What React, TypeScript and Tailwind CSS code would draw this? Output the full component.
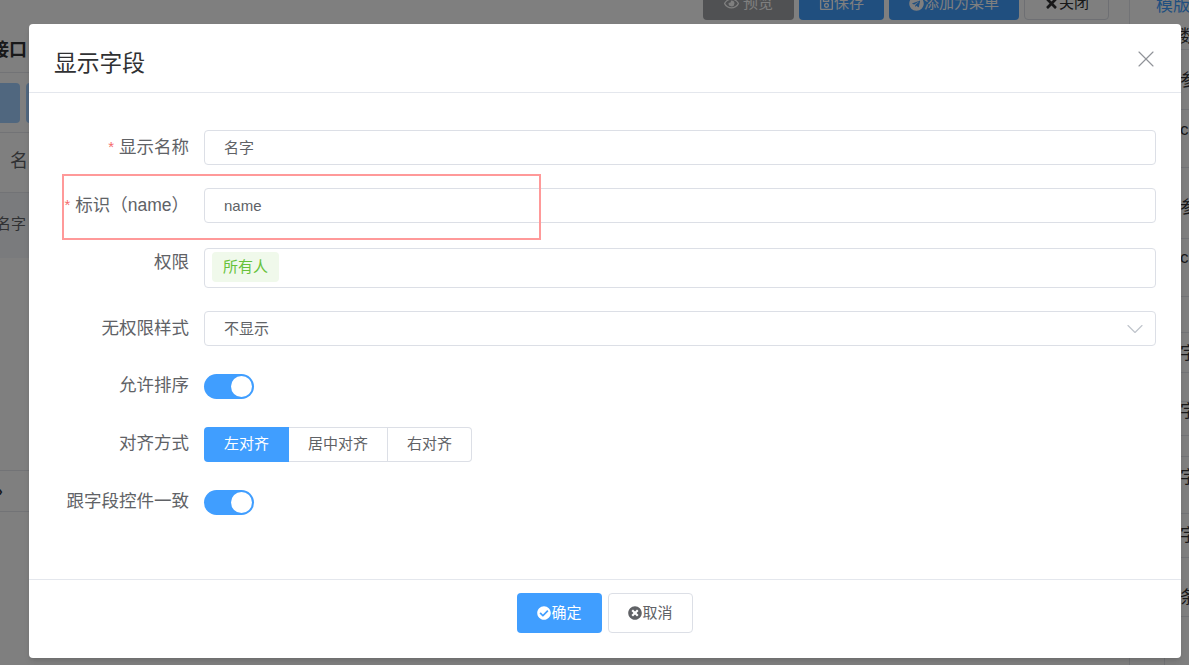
import { X, ChevronDown } from "lucide-react";
import { FaCheckCircle, FaTimesCircle, FaRegSave, FaTimes, FaRegEye, FaTelegram } from "react-icons/fa";

const FONT = "font-['Liberation_Sans','Noto_Sans_CJK_SC',sans-serif]";

function FormRow({ label, required, height, labelClass, children }: { label: string; required?: boolean; height: string; labelClass?: string; children: React.ReactNode }) {
  return (
    <div className={`flex ${height}`}>
      <label className={`flex h-[34px] w-[175px] shrink-0 items-center justify-end pr-[15px] text-[17.5px] text-[#606266] whitespace-nowrap ${labelClass ?? ""}`}>
        {required && <span className="mr-[5px] text-[15px] text-[#f56c6c]">*</span>}
        {label}
      </label>
      <div className="min-w-0 flex-1">{children}</div>
    </div>
  );
}

function TextBox({ value }: { value: string }) {
  return (
    <div className="flex h-[35px] items-center rounded border border-[#dcdfe6] bg-white pl-[19px] pt-[2px] text-[15px] text-[#606266]">
      {value}
    </div>
  );
}

function Toggle() {
  return (
    <div className="flex h-[25px] w-[50px] items-center justify-end rounded-full bg-[#409eff] pr-[2px]">
      <div className="h-[21px] w-[21px] rounded-full bg-white" />
    </div>
  );
}

function Backdrop() {
  return (
    <div className="flex h-[665px] w-full flex-col overflow-hidden bg-white">
      <div className="-mt-[14px] flex h-[34px] justify-end gap-[5px] pr-[80px] text-[15px]">
        <div className="flex w-[91px] items-center justify-center gap-1 rounded bg-[#a0a2a6] text-white"><FaRegEye />预览</div>
        <div className="flex w-[85px] items-center justify-center rounded bg-[#409eff] text-white"><FaRegSave />保存</div>
        <div className="flex w-[130px] items-center justify-center rounded bg-[#409eff] text-white"><FaTelegram />添加为菜单</div>
        <div className="flex w-[85px] items-center justify-center rounded border border-[#dcdfe6] text-[#303133]"><FaTimes />关闭</div>
      </div>
      <div className="flex flex-1">
        <div className="flex w-[29px] flex-col">
          <div className="flex h-[53px] items-center overflow-hidden whitespace-nowrap border-b border-[#e4e7ed] pt-[8px] text-lg font-bold text-[#303133]"><span className="-ml-[9px]">接口</span></div>
          <div className="flex h-[60px] items-center gap-[6px] overflow-hidden border-b border-[#e4e7ed]">
            <div className="h-[40px] w-[20px] shrink-0 rounded-r bg-[#a0cfff]" />
            <div className="h-[40px] w-[20px] shrink-0 rounded-l bg-[#a0cfff]" />
          </div>
          <div className="flex h-[60px] items-center overflow-hidden whitespace-nowrap border-b border-[#e4e7ed] pb-[3px] pl-[10px] text-lg text-[#606266]">名字</div>
          <div className="flex h-[65px] items-center overflow-hidden whitespace-nowrap bg-[#f5f7fa] pb-[3px] text-[15px] text-[#606266]"><span className="-ml-[4px]">名字</span></div>
          <div className="mt-[212px] flex h-[42px] items-center overflow-hidden border-y border-[#e4e7ed] text-sm font-bold text-[#303133]"><span className="-ml-[2px]">›</span></div>
        </div>
      </div>
    </div>
  );
}

const EDGE_ROWS = [
  { h: "h-[60px] pt-[2px]", t: "参" },
  { h: "h-[58px] pb-[18px]", t: "cr" },
  { h: "h-[71px] pt-[10px]", t: "参" },
  { h: "h-[58px] pb-[20px]", t: "cr" },
  { h: "h-[36px]", t: "" },
  { h: "h-[40px] pt-[2px]", t: "字" },
  { h: "h-[29px]", t: "" },
  { h: "h-[34px] pb-[14px]", t: "字" },
  { h: "h-[21px]", t: "" },
  { h: "h-[57px] pb-[14px]", t: "字" },
  { h: "h-[44px]", t: "字" },
  { h: "h-[59px] pt-[22px]", t: "条" },
];

function RightEdge() {
  return (
    <div className="absolute left-[1129px] top-0 flex h-full w-[60px] flex-col border-l border-[#e4e7ed] bg-white text-[17px] text-[#303133]">
      <div className="-mt-[7px] h-[31px] shrink-0 whitespace-nowrap pl-[26px] text-[#409eff]">模版</div>
      <div className="flex h-[26px] shrink-0 items-center overflow-hidden whitespace-nowrap border-b border-[#e4e7ed] pl-[50px]">数</div>
      {EDGE_ROWS.map((r, i) => (
        <div key={i} className={`flex ${r.h} shrink-0 items-center overflow-hidden whitespace-nowrap border-b border-[#e4e7ed] pl-[50px]`}>{r.t}</div>
      ))}
      <div className="ml-[34px] flex-1 border-l border-[#e4e7ed]" />
    </div>
  );
}

export default function App() {
  return (
    <div className={`relative h-[665px] w-[1189px] overflow-hidden ${FONT}`}>
      <Backdrop />
      <RightEdge />
      <div className="absolute inset-0 bg-black/50" />

      <div className="absolute left-[29px] top-[24px] flex h-[634px] w-[1152px] flex-col rounded bg-white shadow-md">
        <div className="relative flex h-[69px] items-center border-b border-[#e4e7ed] pl-[25px] pt-[11px] text-[22.75px] text-[#303133]">
          显示字段
          <X className="absolute right-[21px] top-[21px] h-[28px] w-[28px] text-[#909399]" strokeWidth={1} />
        </div>

        <div className="flex-1 pr-[25px] pt-[37px]">
          <FormRow label="显示名称" required height="h-[58px]"><TextBox value="名字" /></FormRow>
          <FormRow label="标识（name）" required height="h-[60px]"><TextBox value="name" /></FormRow>
          <FormRow label="权限" height="h-[63px]" labelClass="-mt-[3px]">
            <div className="flex h-[40px] items-start rounded border border-[#dcdfe6] bg-white pl-[7px] pt-[3px]">
              <span className="flex h-[30px] items-center rounded bg-[#f0f9eb] px-[11px] pt-[1px] text-[15px] text-[#67c23a]">所有人</span>
            </div>
          </FormRow>
          <FormRow label="无权限样式" height="h-[58px]">
            <div className="flex h-[35px] items-center justify-between rounded border border-[#dcdfe6] bg-white pl-[19px] pr-[6px] text-[15px] text-[#606266]">
              <span className="pt-[2px]">不显示</span>
              <ChevronDown className="h-[28px] w-[28px] text-[#c0c4cc]" strokeWidth={1} />
            </div>
          </FormRow>
          <FormRow label="允许排序" height="h-[58px]" labelClass="-mt-[1px]"><div className="pt-[5px]"><Toggle /></div></FormRow>
          <FormRow label="对齐方式" height="h-[58px]" labelClass="-mt-[1px]">
            <div className="flex h-[35px] text-[15px] text-[#606266]">
              <div className="flex w-[85px] items-center justify-center rounded-l bg-[#409eff] text-white">左对齐</div>
              <div className="flex w-[99px] items-center justify-center border-y border-r border-[#dcdfe6]">居中对齐</div>
              <div className="flex w-[84px] items-center justify-center rounded-r border-y border-r border-[#dcdfe6]">右对齐</div>
            </div>
          </FormRow>
          <FormRow label="跟字段控件一致" height="h-[58px]" labelClass="-mt-[1px]"><div className="pt-[5px]"><Toggle /></div></FormRow>
        </div>

        <div className="flex h-[79px] justify-center gap-[6px] border-t border-[#e4e7ed] pt-[13px] text-[15px]">
          <button className="flex h-[40px] w-[85px] items-center justify-center rounded bg-[#409eff] text-white"><FaCheckCircle className="h-[14px] w-[14px]" />确定</button>
          <button className="flex h-[40px] w-[85px] items-center justify-center rounded border border-[#dcdfe6] bg-white text-[#606266]"><FaTimesCircle className="h-[14px] w-[14px]" />取消</button>
        </div>

        <div className="absolute left-[33px] top-[150px] h-[66px] w-[479px] border-2 border-[#f99]" />
      </div>
    </div>
  );
}
